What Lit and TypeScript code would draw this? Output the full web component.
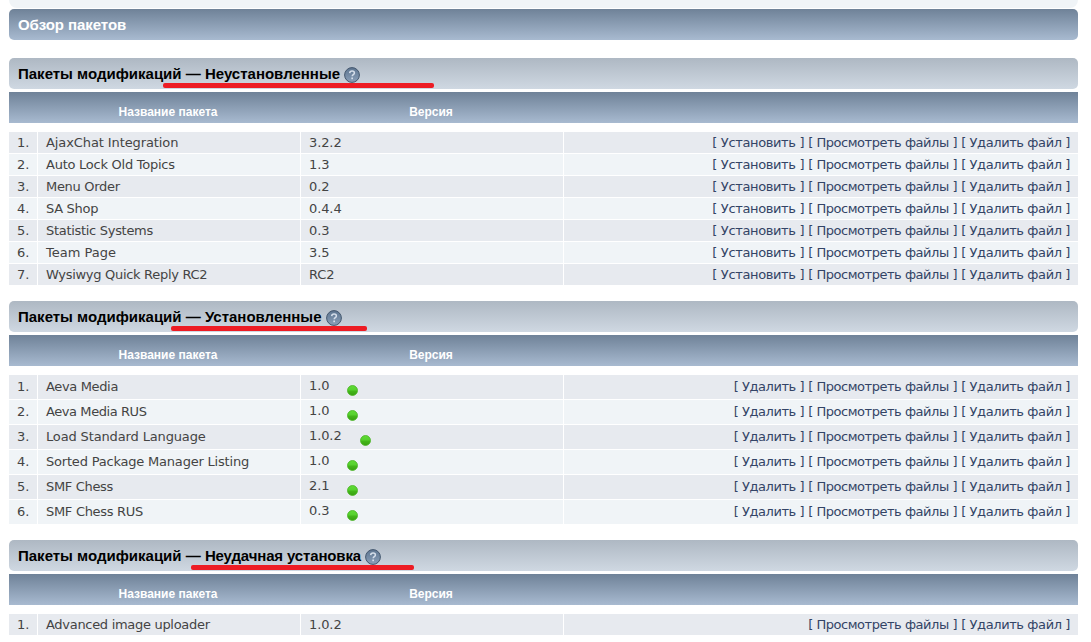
import { LitElement, html, css, svg, nothing } from "lit";
import { customElement, property } from "lit/decorators.js";

interface Entry {
  text: string;
  tracking: number;
}

interface Pkg {
  name: string;
  version: string;
  tracking: number;
}

const uninstalled: Pkg[] = [
  { name: "AjaxChat Integration", version: "3.2.2", tracking: -0.1 },
  { name: "Auto Lock Old Topics", version: "1.3", tracking: -0.25 },
  { name: "Menu Order", version: "0.2", tracking: -0.3 },
  { name: "SA Shop", version: "0.4.4", tracking: -0.3 },
  { name: "Statistic Systems", version: "0.3", tracking: -0.3 },
  { name: "Team Page", version: "3.5", tracking: 0 },
  { name: "Wysiwyg Quick Reply RC2", version: "RC2", tracking: -0.3 },
];

const installed: Pkg[] = [
  { name: "Aeva Media", version: "1.0", tracking: -0.35 },
  { name: "Aeva Media RUS", version: "1.0", tracking: -0.42 },
  { name: "Load Standard Language", version: "1.0.2", tracking: -0.14 },
  { name: "Sorted Package Manager Listing", version: "1.0", tracking: -0.2 },
  { name: "SMF Chess", version: "2.1", tracking: -0.33 },
  { name: "SMF Chess RUS", version: "0.3", tracking: -0.3 },
];

const failed: Pkg[] = [
  { name: "Advanced image uploader", version: "1.0.2", tracking: -0.3 },
];

const install: Entry = { text: "Установить", tracking: -0.36 };
const uninstall: Entry = { text: "Удалить", tracking: -0.45 };
const browse: Entry = { text: "Просмотреть файлы", tracking: -0.47 };
const remove: Entry = { text: "Удалить файл", tracking: -0.4 };

const helpIcon = svg`
  <defs>
    <linearGradient id="h" x1="0" y1="0" x2="0" y2="1">
      <stop offset="0" stop-color="#5d7590"/>
      <stop offset="1" stop-color="#8ba0b9"/>
    </linearGradient>
  </defs>
  <circle cx="8" cy="8" r="7.4" fill="url(#h)" stroke="#45586f" stroke-width="1"/>
  <path d="M5.7 6.1C5.8 4.6 6.8 4 8.1 4c1.400 0 2.300.8 2.300 1.900 0 1.700-2.200 1.700-2.200 3.400" fill="none" stroke="#d5deea" stroke-width="1.500"/>
  <rect x="7.300" y="10.500" width="1.700" height="1.700" fill="#d5deea"/>`;

const dotIcon = svg`
  <defs>
    <linearGradient id="g" x1="0" y1="0" x2="0" y2="1">
      <stop offset="0" stop-color="#5fdc35"/>
      <stop offset="0.480" stop-color="#55cf2c"/>
      <stop offset="0.520" stop-color="#44b81a"/>
      <stop offset="1" stop-color="#38a010"/>
    </linearGradient>
  </defs>
  <circle cx="5.500" cy="5.500" r="5" fill="url(#g)" stroke="#49b423" stroke-width="0.800"/>`;

@customElement("package-section")
export class PackageSection extends LitElement {
  @property() heading = "";
  @property({ attribute: false }) packages: Pkg[] = [];
  @property({ attribute: false }) actions: Entry[] = [];
  @property({ type: Boolean }) active = false;
  @property({ type: Number }) tracking = 0;
  @property({ type: Number }) markStart = 0;
  @property({ type: Number }) markWidth = 0;

  static styles = css`
    :host {
      display: block;
    }
    .title {
      position: relative;
      display: flex;
      align-items: center;
      height: 31px;
      padding-left: 9px;
      box-sizing: border-box;
      border-radius: 5px;
      background: linear-gradient(#aeb8c3, #cfd8e2);
      font: bold 15px "Liberation Sans", Arial, sans-serif;
      color: #000;
      white-space: nowrap;
    }
    .help {
      width: 16px;
      height: 16px;
      margin: 3px 0 0 4px;
      flex: none;
    }
    .mark {
      position: absolute;
      bottom: 1px;
      height: 5px;
      border-radius: 2px;
      background: #ed1c24;
    }
    .head,
    .row {
      display: grid;
      grid-template-columns: 28px 262px 262px 514px;
      column-gap: 1px;
    }
    .head {
      height: 31px;
      margin: 3px 0 9px;
      background: linear-gradient(#6f8298, #a8bad0);
      color: #fff;
      font: bold 12px/40px "Liberation Sans", Arial, sans-serif;
      text-align: center;
    }
    .column {
      padding-right: 2px;
    }
    .rows {
      display: grid;
      row-gap: 1px;
    }
    .row {
      font: 13px/21px "DejaVu Sans", Verdana, sans-serif;
      color: #444;
    }
    .cell {
      height: 21px;
      padding: 0 8px;
      background: #e7eaef;
      white-space: nowrap;
      box-sizing: border-box;
    }
    .version {
      letter-spacing: -0.1px;
    }
    .row:nth-child(even) .cell {
      background: #f0f4f7;
    }
    .active .cell {
      height: 24px;
      line-height: 24px;
    }
    .active .version {
      display: flex;
      line-height: 22px;
    }
    .dot {
      width: 11px;
      height: 11px;
      margin: 10px 0 0 18px;
    }
    .links {
      text-align: right;
    }
    .link {
      color: #334466;
    }
  `;

  render() {
    return html`
      <div class="title">
        <span>Пакеты модификаций —&nbsp;</span>
        <span style="letter-spacing:${this.tracking}px">${this.heading}</span>
        <svg class="help" viewBox="0 0 16 16">${helpIcon}</svg>
        <div class="mark" style="left:${this.markStart}px;width:${this.markWidth}px"></div>
      </div>
      <div class="head">
        <span></span><span class="column">Название пакета</span
        ><span class="column">Версия</span><span></span>
      </div>
      <div class="rows ${this.active ? "active" : ""}">
        ${this.packages.map(
          (p, i) => html`<div class="row">
            <div class="cell">${i + 1}.</div>
            <div class="cell" style="letter-spacing:${p.tracking}px">${p.name}</div>
            <div class="cell version"><span>${p.version}</span>${this.active
              ? html`<svg class="dot" viewBox="0 0 11 11">${dotIcon}</svg>`
              : nothing}</div>
            <div class="cell links">${this.actions.map(
              (a, n) => html`${n ? " " : ""}<a class="link" style="letter-spacing:${a.tracking}px">[ ${a.text} ]</a>`
            )}</div>
          </div>`
        )}
      </div>
    `;
  }
}

@customElement("app-root")
export class AppRoot extends LitElement {
  static styles = css`
    :host {
      display: block;
      height: 642px;
      overflow: hidden;
      background: #fff;
    }
    .page {
      display: flex;
      flex-direction: column;
      width: 1069px;
      margin-left: 9px;
    }
    .panel-end {
      height: 8px;
      margin-bottom: 1px;
      border-radius: 0 0 8px 8px;
      background: #f0f4f7;
    }
    .bar {
      height: 31px;
      padding-left: 9px;
      margin-bottom: 18px;
      border-radius: 5px;
      background: linear-gradient(#6f8298, #a8bad0);
      color: #fff;
      font: bold 15px/31px "Liberation Sans", Arial, sans-serif;
      letter-spacing: -0.05px;
    }
    .sections {
      display: flex;
      flex-direction: column;
      gap: 16px;
    }
  `;

  render() {
    return html`
      <div class="page">
        <div class="panel-end"></div>
        <div class="bar">Обзор пакетов</div>
        <div class="sections">
          <package-section
            heading="Неустановленные"
            .packages=${uninstalled}
            .actions=${[install, browse, remove]}
            .markStart=${154}
            .markWidth=${271}
          ></package-section>
          <package-section
            heading="Установленные"
            active
            .packages=${installed}
            .actions=${[uninstall, browse, remove]}
            .markStart=${162}
            .markWidth=${196}
          ></package-section>
          <package-section
            heading="Неудачная установка"
            .packages=${failed}
            .actions=${[browse, remove]}
            .tracking=${-0.14}
            .markStart=${182}
            .markWidth=${223}
          ></package-section>
        </div>
      </div>
    `;
  }
}
